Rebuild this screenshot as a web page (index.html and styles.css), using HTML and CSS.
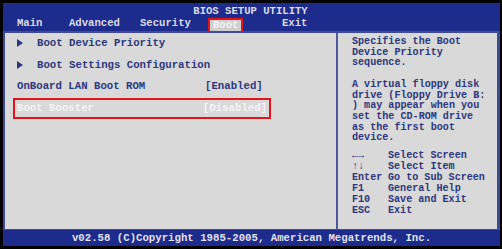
FILE: index.html
```html
<!DOCTYPE html>
<html lang="en">
<head>
    <meta charset="UTF-8">
    <title>BIOS Setup Utility</title>
    <link rel="stylesheet" href="styles.css">
</head>
<body>
    <div class="screen">
        <div class="title-bar">
            <div class="title">BIOS SETUP UTILITY</div>
            <div class="tabs">
                <span class="tab tab-main">Main</span>
                <span class="tab">Advanced</span>
                <span class="tab">Security</span>
                <span class="tab"><span class="tab-active">Boot</span></span>
                <span class="tab">Exit</span>
            </div>
        </div>

        <div class="panel">
            <div class="menu">
                <div class="item"><span class="arrow"></span><span class="label">Boot Device Priority</span></div>
                <div class="item"><span class="arrow"></span><span class="label">Boot Settings Configuration</span></div>
                <div class="item"><span class="label">OnBoard LAN Boot ROM</span><span class="value">[Enabled]</span></div>
                <div class="item selected"><span class="label">Boot Booster</span><span class="value">[Disabled]</span></div>
            </div>

            <div class="help">
                <p>Specifies the Boot<br>Device Priority<br>sequence.</p>
                <p>A virtual floppy disk<br>drive (Floppy Drive B:<br>) may appear when you<br>set the CD-ROM drive<br>as the first boot<br>device.</p>
                <div class="keys">
                    <div><span class="key">&larr;&rarr;</span>Select Screen</div>
                    <div><span class="key">&uarr;&darr;</span>Select Item</div>
                    <div><span class="key">Enter</span>Go to Sub Screen</div>
                    <div><span class="key">F1</span>General Help</div>
                    <div><span class="key">F10</span>Save and Exit</div>
                    <div><span class="key">ESC</span>Exit</div>
                </div>
            </div>
        </div>

        <div class="footer">v02.58 (C)Copyright 1985-2005, American Megatrends, Inc.</div>
    </div>
</body>
</html>
```

FILE: styles.css
```css
body {
    margin: 0;
    padding: 0;
    background: #000;
    font-family: "Liberation Mono", "Courier New", monospace;
    font-weight: bold;
    overflow: hidden;
}

.screen {
    width: 497px;
    height: 243px;
    padding: 3px 2px 3px 3px;
    display: flex;
    flex-direction: column;
}

/* top bar */
.title-bar {
    height: 28px;
    background: #1d2b8c;
    color: #dcdce6;
    font-size: 10.6px;
    box-sizing: border-box;
    padding-top: 3px;
}
.title {
    text-align: center;
    line-height: 11px;
    padding-right: 2px;
}
.tabs {
    display: flex;
    padding-left: 14px;
    line-height: 11px;
    margin-top: 1px;
}
.tab {
    width: 71px;
    flex-shrink: 0;
}
.tab-main {
    width: 52px;
}
.tab-active {
    display: inline-block;
    background: #cfcfd2;
    color: #f2f2f2;
    border: 2px solid #e0141a;
    padding: 0 3px 1px 3px;
    margin-left: -3px;
    line-height: 10px;
}

/* main area */
.panel {
    flex: 1;
    display: flex;
    background: #d9d9d9;
    border: 2px solid #3f4c95;
    border-right-width: 3px;
    border-bottom-width: 1px;
}
.menu {
    width: 331px;
    border-right: 2px solid #4d5a9c;
    color: #2b377e;
    font-size: 10.7px;
}
.item {
    display: flex;
    margin: 0 65px 0 8px;
    padding: 0 2px;
    border: 2px solid transparent;
    line-height: 17.5px;
}
.item .label {
    width: 188px;
}
.arrow {
    width: 0;
    height: 0;
    border-top: 4px solid transparent;
    border-bottom: 4px solid transparent;
    border-left: 6px solid #2b377e;
    margin: 4px 14px 0 0;
}
.selected {
    border-color: #e0141a;
    color: #f4f4f4;
}

.help {
    flex: 1;
    padding: 4px 0 0 14px;
    color: #2b377e;
    font-size: 10.1px;
    line-height: 10.7px;
}
.help p {
    margin: 0 0 10.7px 0;
}
.keys {
    margin-top: -3.5px;
    line-height: 10.9px;
}
.key {
    display: inline-block;
    width: 36px;
}

/* bottom bar */
.footer {
    height: 16px;
    line-height: 16px;
    background: #1d2b8c;
    color: #e2e2ea;
    text-align: center;
    font-size: 10.7px;
}
```
